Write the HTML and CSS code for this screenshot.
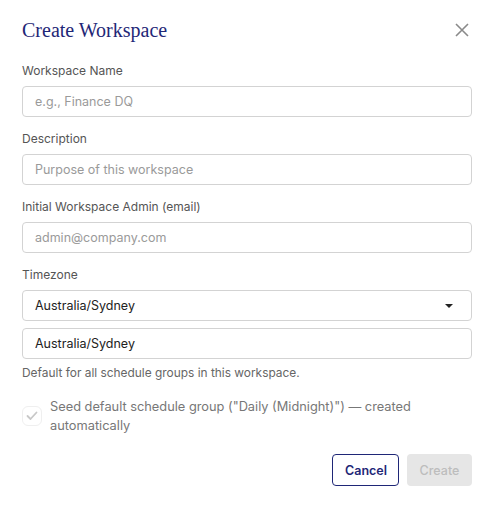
FILE: index.html
```html
<!DOCTYPE html>
<html lang="en">
	<head>
		<meta charset="UTF-8" />
		<meta name="viewport" content="width=device-width, initial-scale=1.0" />
		<title>Create Workspace</title>
		<link rel="stylesheet" href="styles.css">
	</head>
	<body>
		<div class="modal">
			<div class="modal-header">
				<h2 class="modal-title">Create Workspace</h2>
				<button class="close-btn" aria-label="Close">
					<svg width="14" height="14" viewBox="0 0 14 14">
						<path d="M1 1 L13 13 M13 1 L1 13" stroke="#8a8a8a" stroke-width="1.6" fill="none" />
					</svg>
				</button>
			</div>

			<form class="form">
				<div class="field">
					<label for="ws-name">Workspace Name</label>
					<input type="text" id="ws-name" placeholder="e.g., Finance DQ" />
				</div>

				<div class="field">
					<label for="ws-desc">Description</label>
					<input type="text" id="ws-desc" placeholder="Purpose of this workspace" />
				</div>

				<div class="field">
					<label for="ws-admin">Initial Workspace Admin (email)</label>
					<input type="text" id="ws-admin" placeholder="admin@company.com" />
				</div>

				<div class="field">
					<label for="ws-tz">Timezone</label>
					<div class="select">
						<span>Australia/Sydney</span>
						<svg width="10" height="6" viewBox="0 0 10 6">
							<path d="M1 1 L9 1 L5 5 Z" fill="#222" />
						</svg>
					</div>
					<input type="text" id="ws-tz" value="Australia/Sydney" class="tz-input" />
					<p class="help">Default for all schedule groups in this workspace.</p>
				</div>

				<div class="seed">
					<span class="check">
						<svg width="12" height="10" viewBox="0 0 12 10">
							<path d="M1.5 5 L4.5 8 L10.5 1.5" stroke="#c8c8c8" stroke-width="1.8" fill="none" stroke-linecap="round" stroke-linejoin="round" />
						</svg>
					</span>
					<span class="seed-text">Seed default schedule group ("Daily (Midnight)") — created automatically</span>
				</div>

				<div class="actions">
					<button type="button" class="btn btn-cancel">Cancel</button>
					<button type="button" class="btn btn-create" disabled>Create</button>
				</div>
			</form>
		</div>
	</body>
</html>
```

FILE: styles.css
```css
body {
	margin: 0;
	background-color: #fff;
	font-family: Inter, "Liberation Sans", Arial, sans-serif;
}

.modal {
	padding: 16px 20px 0 22px;
}

.modal-header {
	display: flex;
	justify-content: space-between;
	align-items: center;
	height: 28px;
}

.modal-title {
	margin: 0;
	font-family: "Liberation Serif", "Times New Roman", serif;
	font-weight: normal;
	font-size: 20px;
	color: #1f2777;
}

.close-btn {
	background: none;
	border: none;
	padding: 0;
	margin-right: 3px;
	cursor: pointer;
	display: flex;
}

.form {
	margin-top: 17px;
}

.field {
	display: flex;
	flex-direction: column;
	margin-bottom: 12px;
}

label {
	font-size: 12px;
	line-height: 20px;
	color: #555;
	margin-bottom: 5px;
}

input[type='text'],
.select {
	box-sizing: border-box;
	height: 31px;
	padding: 0 12px;
	border: 1px solid #d3d3d3;
	border-radius: 4px;
	font-family: inherit;
	font-size: 12.5px;
	color: #222;
	outline: none;
}

input::placeholder {
	color: #9a9a9a;
}

.select {
	display: flex;
	justify-content: space-between;
	align-items: center;
	padding-right: 17px;
}

.tz-input {
	margin-top: 7px;
}

.help {
	margin: 6px 0 0;
	font-size: 11.9px;
	line-height: 16px;
	color: #666;
}

.seed {
	display: flex;
	align-items: center;
	gap: 8px;
	margin-top: 16px;
}

.check {
	flex: none;
	display: flex;
	justify-content: center;
	align-items: center;
	width: 18px;
	height: 18px;
	border: 1px solid #efefef;
	border-radius: 6px;
}

.seed-text {
	font-size: 12.8px;
	line-height: 19px;
	color: #777;
	max-width: 380px;
}

.actions {
	display: flex;
	justify-content: flex-end;
	gap: 8px;
	margin-top: 19px;
}

.btn {
	height: 32px;
	padding: 0 12px;
	border-radius: 4px;
	font-family: inherit;
	font-size: 12.5px;
	font-weight: 600;
	cursor: pointer;
}

.btn-cancel {
	background-color: #fff;
	border: 1px solid #1f2777;
	color: #1f2777;
	width: 67px;
}

.btn-create {
	background-color: #e6e6e6;
	border: none;
	color: #bdbdbd;
	font-weight: 500;
	width: 65px;
}
```
